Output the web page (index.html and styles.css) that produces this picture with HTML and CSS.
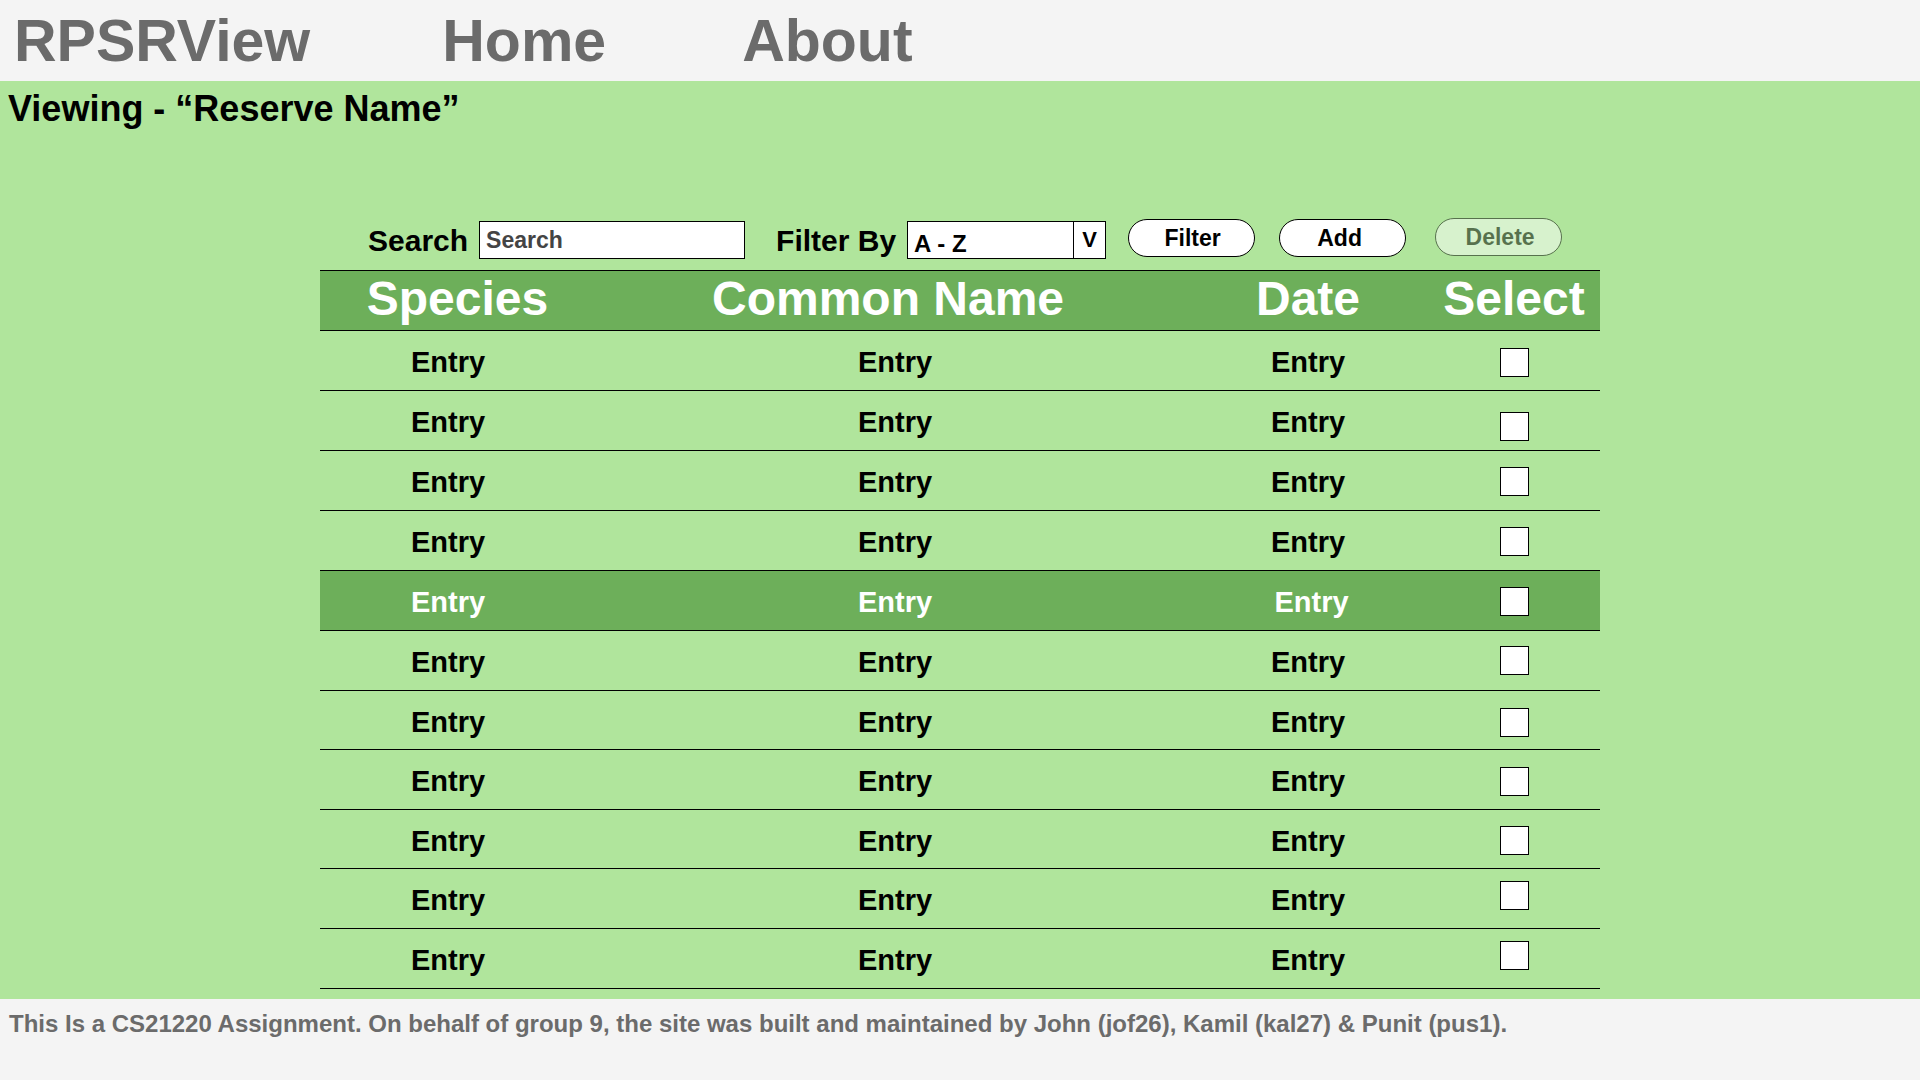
FILE: index.html
```html
<!DOCTYPE html>
<html lang="en">
<head>
<meta charset="utf-8">
<title>RPSRView</title>
<link rel="stylesheet" href="styles.css">
</head>
<body>
<header class="topbar">
  <a class="nav-link brand" href="#">RPSRView</a>
  <a class="nav-link" href="#">Home</a>
  <a class="nav-link" href="#">About</a>
</header>
<main class="main">
  <h1 class="title">Viewing - “Reserve Name”</h1>
  <section class="content">
    <div class="toolbar">
      <label class="tool-label" for="search">Search</label>
      <input class="search-input" id="search" type="text" placeholder="Search">
      <span class="tool-label filter-label">Filter By</span>
      <div class="select-box">
        <span class="select-value">A - Z</span>
        <span class="select-arrow">V</span>
      </div>
      <button class="btn btn-filter">Filter</button>
      <button class="btn btn-add">Add</button>
      <button class="btn btn-delete" disabled>Delete</button>
    </div>
    <div class="grid">
      <div class="row head">
        <div class="cell c1">Species</div>
        <div class="cell c2">Common Name</div>
        <div class="cell c3">Date</div>
        <div class="cell c4">Select</div>
      </div>
      <div class="row"><div class="cell c1">Entry</div><div class="cell c2">Entry</div><div class="cell c3">Entry</div><div class="cell c4"><input class="check" type="checkbox"></div></div>
      <div class="row"><div class="cell c1">Entry</div><div class="cell c2">Entry</div><div class="cell c3">Entry</div><div class="cell c4"><input class="check nudge-down" type="checkbox"></div></div>
      <div class="row"><div class="cell c1">Entry</div><div class="cell c2">Entry</div><div class="cell c3">Entry</div><div class="cell c4"><input class="check nudge-up-1" type="checkbox"></div></div>
      <div class="row"><div class="cell c1">Entry</div><div class="cell c2">Entry</div><div class="cell c3">Entry</div><div class="cell c4"><input class="check nudge-up-1" type="checkbox"></div></div>
      <div class="row selected"><div class="cell c1">Entry</div><div class="cell c2">Entry</div><div class="cell c3 shifted">Entry</div><div class="cell c4"><input class="check nudge-up-1" type="checkbox"></div></div>
      <div class="row"><div class="cell c1">Entry</div><div class="cell c2">Entry</div><div class="cell c3">Entry</div><div class="cell c4"><input class="check nudge-up-2" type="checkbox"></div></div>
      <div class="row short"><div class="cell c1">Entry</div><div class="cell c2">Entry</div><div class="cell c3">Entry</div><div class="cell c4"><input class="check" type="checkbox"></div></div>
      <div class="row"><div class="cell c1">Entry</div><div class="cell c2">Entry</div><div class="cell c3">Entry</div><div class="cell c4"><input class="check" type="checkbox"></div></div>
      <div class="row short"><div class="cell c1">Entry</div><div class="cell c2">Entry</div><div class="cell c3">Entry</div><div class="cell c4"><input class="check nudge-up-1" type="checkbox"></div></div>
      <div class="row"><div class="cell c1">Entry</div><div class="cell c2">Entry</div><div class="cell c3">Entry</div><div class="cell c4"><input class="check nudge-up-5" type="checkbox"></div></div>
      <div class="row"><div class="cell c1">Entry</div><div class="cell c2">Entry</div><div class="cell c3">Entry</div><div class="cell c4"><input class="check nudge-up-5" type="checkbox"></div></div>
    </div>
  </section>
</main>
<footer class="footer">This Is a CS21220 Assignment. On behalf of group 9, the site was built and maintained by John (jof26), Kamil (kal27) &amp; Punit (pus1).</footer>
</body>
</html>
```
FILE: styles.css
```css
* { box-sizing: border-box; }

html, body {
  margin: 0;
  padding: 0;
}

body {
  width: 1920px;
  height: 1080px;
  overflow: hidden;
  font-family: "Liberation Sans", Arial, sans-serif;
  font-weight: bold;
  background: #f4f4f4;
}

.topbar {
  height: 81px;
  background: #f4f4f4;
  display: flex;
  align-items: flex-start;
  gap: 136px;
  padding: 2px 0 0 14px;
}

.nav-link {
  font-size: 59px;
  line-height: 79px;
  color: #6b6b6b;
  text-decoration: none;
}

.nav-link.brand {
  margin-right: -4px;
}

.main {
  background: #b0e59c;
  height: 918px;
  padding-top: 7px;
}

.title {
  margin: 0;
  padding-left: 8px;
  font-size: 36px;
  line-height: 42px;
  color: #000;
  height: 42px;
}

.content {
  width: 1280px;
  margin: 88px auto 0;
}

.toolbar {
  display: flex;
  align-items: flex-start;
  height: 40px;
  margin-bottom: 12px;
  padding-left: 48px;
}

.tool-label {
  font-size: 30px;
  line-height: 33px;
  margin-top: 6px;
  color: #000;
}

.search-input {
  margin: 3px 0 0 11px;
  width: 266px;
  height: 38px;
  border: 1px solid #000;
  background: #fff;
  padding: 0 0 0 6px;
  font-family: "Liberation Sans", Arial, sans-serif;
  font-weight: bold;
  font-size: 23px;
  line-height: 36px;
  color: #444;
  outline: none;
}

.search-input::placeholder {
  color: #444;
  opacity: 1;
}

.filter-label {
  margin-left: 31px;
}

.select-box {
  margin: 3px 0 0 11px;
  width: 199px;
  height: 38px;
  border: 1px solid #000;
  background: #fff;
  display: flex;
}

.select-value {
  flex: 1;
  font-size: 24px;
  line-height: 36px;
  padding: 4px 0 0 6px;
  color: #000;
}

.select-arrow {
  width: 32px;
  border-left: 1px solid #000;
  font-size: 22px;
  line-height: 36px;
  text-align: center;
  color: #000;
}

.btn {
  width: 127px;
  height: 38px;
  margin-top: 1px;
  border: 1px solid #000;
  border-radius: 19px;
  background: #fff;
  font-family: "Liberation Sans", Arial, sans-serif;
  font-weight: bold;
  font-size: 23px;
  line-height: 36px;
  padding: 0;
  color: #000;
}

.btn-filter { margin-left: 22px; padding-left: 2px; }
.btn-add { margin-left: 24px; padding-right: 6px; }

.btn-delete {
  margin-left: 29px;
  margin-top: 0;
  padding-left: 3px;
  opacity: 0.5;
}

.grid {
  border-top: 1px solid #000;
}

.row {
  display: grid;
  grid-template-columns: 268px 600px 240px 172px;
  height: 60px;
  border-bottom: 1px solid #000;
}

.row.short {
  height: 59px;
}

.cell {
  height: 100%;
  text-align: center;
  font-size: 29px;
  line-height: 56px;
  padding-top: 3px;
  color: #000;
}

.row .c1 { padding-right: 12px; }
.row .c2 { padding-left: 14px; }
.row .c3.shifted { padding-left: 7px; }

.row.head {
  background: #6daf5a;
}

.row.head .cell {
  font-size: 48px;
  line-height: 55px;
  padding: 0 0 4px 0;
  color: #fff;
}

.row.head .c1 { padding-left: 7px; }

.row.selected {
  background: #6daf5a;
}

.row.selected .cell {
  color: #fff;
}

.cell.c4 {
  display: flex;
  justify-content: center;
  align-items: center;
  padding-top: 4px;
}

.check {
  appearance: none;
  -webkit-appearance: none;
  width: 29px;
  height: 29px;
  margin: 0;
  border: 1px solid #000;
  background: #fff;
}

.check.nudge-down { margin-top: 8px; }
.check.nudge-up-1 { margin-top: -2px; }
.check.nudge-up-2 { margin-top: -5px; }
.check.nudge-up-5 { margin-top: -11px; }

.footer {
  height: 81px;
  background: #f4f4f4;
  padding: 11px 0 0 9px;
  font-size: 24px;
  line-height: 28px;
  color: #6b6b6b;
  white-space: nowrap;
}
```
